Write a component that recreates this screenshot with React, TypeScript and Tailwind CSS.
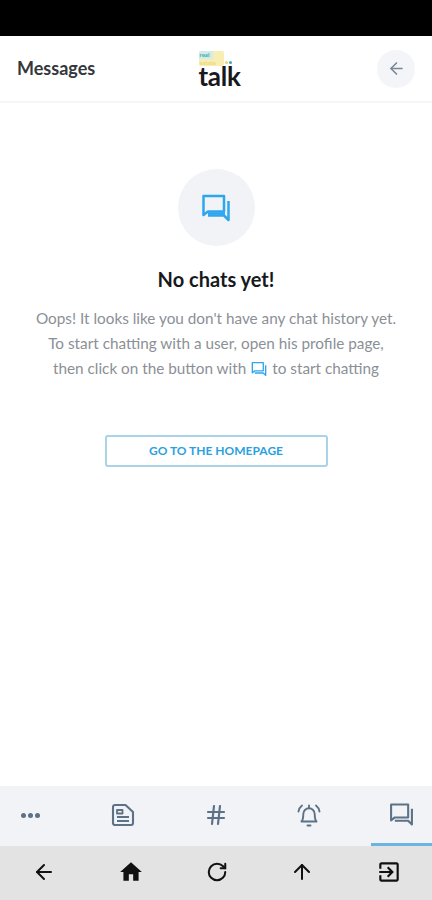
import { ArrowLeft, ArrowUp, Hash, RotateCw } from "lucide-react";

function ChatIcon({ className, merged }: { className: string; merged?: boolean }) {
  return (
    <svg viewBox="0 0 30 30" fill="none" stroke="currentColor" strokeWidth="2.500" strokeLinejoin="round" className={className}>
      <path d="M2.500 3h20.500v15.500H7l-4.500 3.500z" />
      <path d="M27.500 8v19l-4.500-4.500H7" />
      {merged && <path d="M7 20.500h17" />}
    </svg>
  );
}

function DocIcon() {
  return (
    <svg viewBox="0 0 24 24" fill="none" stroke="currentColor" strokeWidth="2.1" strokeLinejoin="round" className="h-[24px] w-[24px]">
      <path d="M2 4a2 2 0 0 1 2-2h10.500L22 9v11a2 2 0 0 1-2 2H4a2 2 0 0 1-2-2z" />
      <path d="M6 7h5.500v3.500H6zM6 14h12M6 18h12" strokeWidth="1.800" />
    </svg>
  );
}

function BellIcon() {
  return (
    <svg viewBox="0 0 26 26" fill="none" stroke="currentColor" strokeWidth="1.9" strokeLinecap="round" strokeLinejoin="round" className="h-[26px] w-[26px]">
      <path d="M5.500 19.500c1.500-1.500 1.800-3.500 1.800-7.500a5.700 5.700 0 0 1 11.400 0c0 4 .3 6 1.800 7.500z" />
      <path d="M11.500 23.500h3M13 6.300V3.500" />
      <path d="M6 3.500C4 5 3 7 2.500 9.500M20 3.500c2 1.500 3 3.500 3.500 6" />
    </svg>
  );
}

function HomeIcon() {
  return (
    <svg viewBox="0 0 24 24" fill="currentColor" className="h-[26px] w-[26px]">
      <path d="M10 20v-6h4v6h5v-8h3L12 3 2 12h3v8z" />
    </svg>
  );
}

function ExitIcon() {
  return (
    <svg viewBox="0 0 24 24" fill="currentColor" className="h-[26px] w-[26px]">
      <path d="M10.090 15.590 11.500 17l5-5-5-5-1.410 1.410L12.670 11H3v2h9.670l-2.580 2.590zM19 3H5c-1.110 0-2 .9-2 2v4h2V5h14v14H5v-4H3v4c0 1.100.89 2 2 2h14c1.100 0 2-.9 2-2V5c0-1.100-.9-2-2-2z" />
    </svg>
  );
}

function Logo() {
  return (
    <div className="relative ml-[9px] flex h-[36px] w-[44px] flex-col items-start leading-none">
      <div className="flex h-[15px] w-[25px] flex-col rounded-[2px] bg-[#f8eeb4] text-[6px] font-bold leading-[7px]">
        <span className="h-[8px] w-[14px] rounded-tl-[2px] bg-[#d3ece8] pl-[1px] text-[#3aa9b5]">real</span>
        <span className="pl-[1px] text-[#ecd978]">estate</span>
      </div>
      <span className="absolute left-[26px] top-[10px] h-[3px] w-[3px] rounded-full bg-[#ecd466]" />
      <span className="absolute left-[30px] top-[10px] h-[3px] w-[3px] rounded-full bg-[#3aa9b5]" />
      <span className="text-[26px] font-bold leading-[21px] tracking-[-0.3px] text-[#17191c]">talk</span>
    </div>
  );
}

const navItems = [
  { key: "doc", icon: <DocIcon /> },
  { key: "hash", icon: <Hash className="h-[24px] w-[24px]" strokeWidth={2.2} /> },
  { key: "bell", icon: <BellIcon /> },
];

const browserIcons = [
  <ArrowLeft key="back" className="h-[24px] w-[24px]" strokeWidth={2} />,
  <HomeIcon key="home" />,
  <RotateCw key="reload" className="h-[22px] w-[22px]" strokeWidth={2.2} />,
  <ArrowUp key="up" className="h-[24px] w-[24px]" strokeWidth={2} />,
  <ExitIcon key="exit" />,
];

export default function App() {
  return (
    <div className="flex h-[900px] w-[432px] flex-col overflow-hidden bg-white font-['Lato',sans-serif]">
      <div className="h-[36px] bg-black" />

      <header className="flex h-[67px] items-center justify-between border-b-2 border-[#f5f6f8] pl-[17px] pr-[17px]">
        <span className="w-[120px] text-[18px] font-bold text-[#34373b]">Messages</span>
        <Logo />
        <div className="flex w-[120px] justify-end">
          <button className="flex h-[38px] w-[38px] items-center justify-center rounded-full bg-[#f3f5f8] text-[#7b8794]">
            <ArrowLeft className="h-[19px] w-[19px]" strokeWidth={2} />
          </button>
        </div>
      </header>

      <main className="flex flex-1 flex-col items-center pt-[66px]">
        <div className="flex h-[77px] w-[77px] items-center justify-center rounded-full bg-[#f1f3f6] text-[#2ea6ee]">
          <ChatIcon merged className="h-[30px] w-[30px]" />
        </div>
        <h1 className="mt-[20px] text-[20px] font-bold leading-[26px] text-[#17191c]">No chats yet!</h1>
        <div className="mt-[14px] text-center text-[15.300px] leading-[25px] text-[#8b9096]">
          <p>Oops! It looks like you don't have any chat history yet.</p>
          <p>To start chatting with a user, open his profile page,</p>
          <p className="flex items-center justify-center gap-[5px]">
            then click on the button with
            <ChatIcon className="h-[16px] w-[16px] text-[#2ea6ee]" />
            to start chatting
          </p>
        </div>
        <button className="mt-[54px] h-[32px] w-[223px] rounded-[3px] border-2 border-[#a9d3e6] text-[12px] font-bold text-[#2b9fe0]">
          GO TO THE HOMEPAGE
        </button>
      </main>

      <nav className="flex h-[60px] items-stretch justify-between bg-[#f1f3f7] text-[#5d7286]">
        <div className="flex w-[61px] items-center justify-center gap-[2px] pb-[2px]">
          <span className="h-[5px] w-[5px] rounded-full bg-[#5d7286]" />
          <span className="h-[5px] w-[5px] rounded-full bg-[#5d7286]" />
          <span className="h-[5px] w-[5px] rounded-full bg-[#5d7286]" />
        </div>
        {navItems.map((item) => (
          <div key={item.key} className="flex w-[61px] items-center justify-center pb-[2px]">
            {item.icon}
          </div>
        ))}
        <div className="flex w-[61px] items-center justify-center border-b-[3px] border-[#6cb4e4]">
          <ChatIcon className="h-[25px] w-[25px]" />
        </div>
      </nav>

      <footer className="flex h-[54px] items-center justify-between bg-[#e3e3e3] pb-[2px] pl-[32px] pr-[30px] text-[#111]">
        {browserIcons}
      </footer>
    </div>
  );
}
